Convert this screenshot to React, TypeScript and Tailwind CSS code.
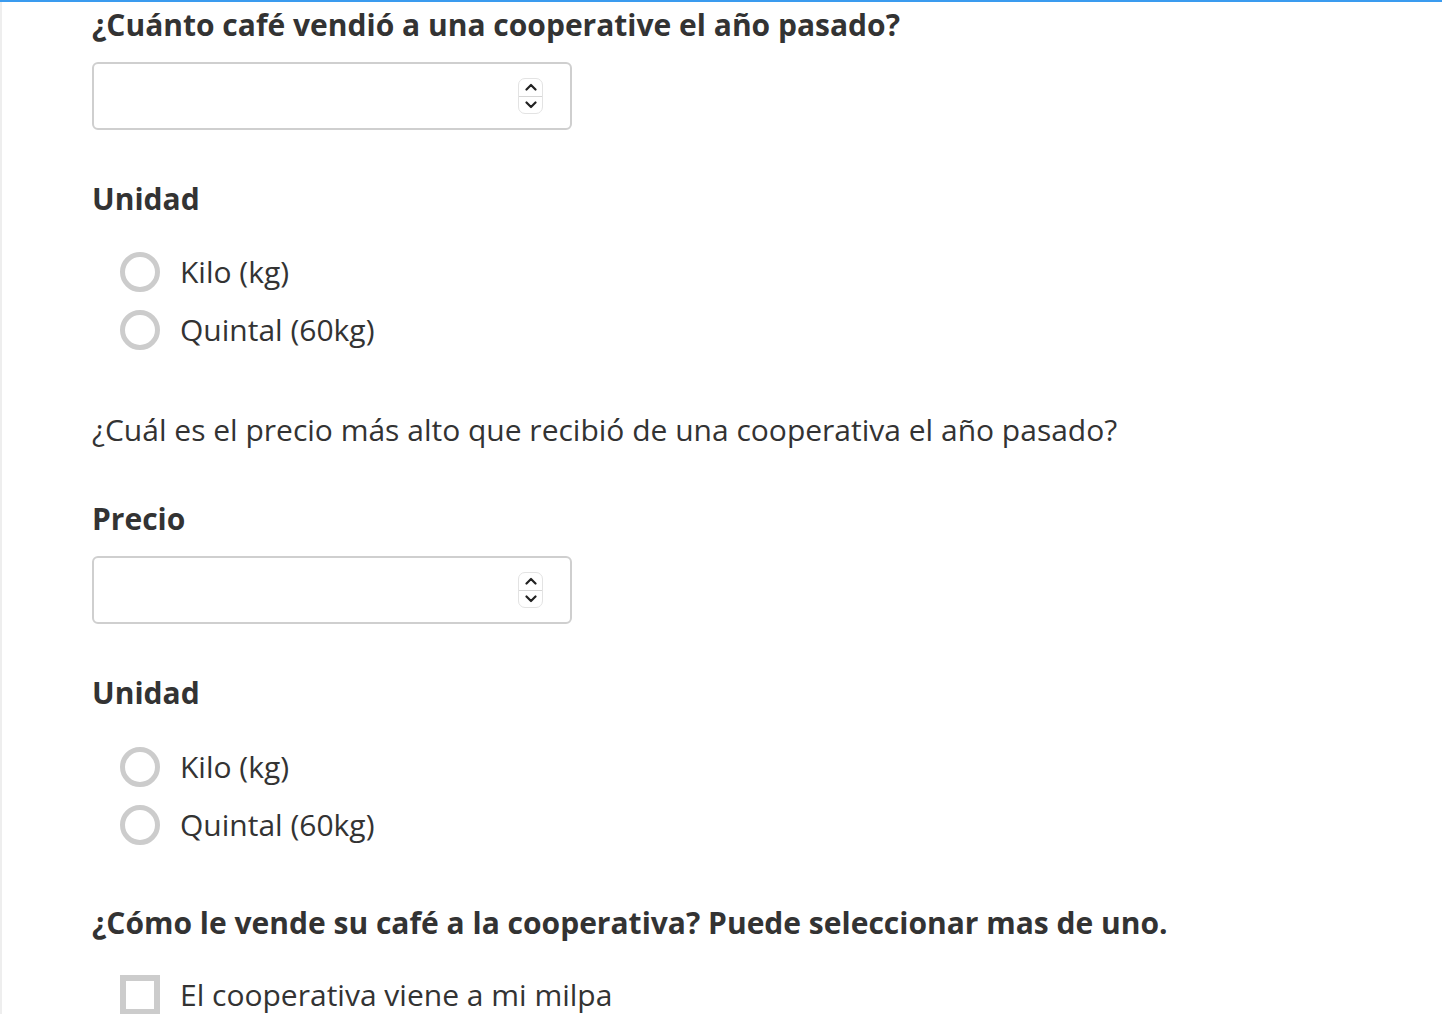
function Spinner() {
  return (
    <div className="absolute right-[27px] top-1/2 -translate-y-1/2 w-[25px] h-[36px] rounded-[7px] border border-[#e3e3e3] bg-white flex flex-col items-center">
      <div className="flex-1 flex items-center justify-center">
        <svg width="12" height="8" viewBox="0 0 12 8">
          <path d="M1.5 6.5 L6 2 L10.5 6.5" fill="none" stroke="#222" strokeWidth="2.2" strokeLinecap="round" strokeLinejoin="round" />
        </svg>
      </div>
      <div className="w-full h-px bg-[#d6d6d6]" />
      <div className="flex-1 flex items-center justify-center">
        <svg width="12" height="8" viewBox="0 0 12 8">
          <path d="M1.5 1.5 L6 6 L10.5 1.5" fill="none" stroke="#222" strokeWidth="2.2" strokeLinecap="round" strokeLinejoin="round" />
        </svg>
      </div>
    </div>
  );
}

function NumberInput() {
  return (
    <div className="relative w-[480px] h-[68px] rounded-[6px] border-2 border-[#cfcfcf] bg-white">
      <Spinner />
    </div>
  );
}

function Radio({ label }: { label: string }) {
  return (
    <label className="flex items-center h-[58px] pl-[28px]">
      <span className="w-[40px] h-[40px] rounded-full border-[5px] border-[#cccccc] bg-white shrink-0" />
      <span className="ml-[20px] text-[30px] leading-[40px] text-[#333]">{label}</span>
    </label>
  );
}

function Checkbox({ label }: { label: string }) {
  return (
    <label className="flex items-center h-[58px] pl-[28px]">
      <span className="w-[40px] h-[40px] border-[6px] border-[#cccccc] bg-white shrink-0" />
      <span className="ml-[20px] text-[30px] leading-[40px] text-[#333]">{label}</span>
    </label>
  );
}

function UnitGroup({ gap }: { gap: string }) {
  return (
    <div>
      <h3 className="text-[30px] font-bold text-[#333] leading-[40px]">Unidad</h3>
      <div className={gap}>
        <Radio label="Kilo (kg)" />
        <Radio label="Quintal (60kg)" />
      </div>
    </div>
  );
}

export default function App() {
  return (
    <div
      className="h-screen bg-white border-t-2 border-[#3a9bef] overflow-hidden"
      style={{ fontFamily: '"Open Sans", sans-serif' }}
    >
      <div className="flex min-h-full">
        <div className="w-[2px] bg-[#eeeeee] shrink-0" />
        <div className="pl-[90px] pr-10 flex flex-col">
          <h2 className="text-[30px] font-bold text-[#333] leading-[40px] mt-[3px]">
            ¿Cuánto café vendió a una cooperative el año pasado?
          </h2>
          <div className="mt-[17px]">
            <NumberInput />
          </div>
          <div className="mt-[49px]">
            <UnitGroup gap="mt-[24px]" />
          </div>
          <p className="mt-[51px] text-[30px] text-[#333] leading-[40px]">
            ¿Cuál es el precio más alto que recibió de una cooperativa el año pasado?
          </p>
          <h3 className="mt-[49px] text-[30px] font-bold text-[#333] leading-[40px]">Precio</h3>
          <div className="mt-[17px]">
            <NumberInput />
          </div>
          <div className="mt-[49px]">
            <UnitGroup gap="mt-[25px]" />
          </div>
          <h2 className="mt-[49px] text-[30px] font-bold text-[#333] leading-[40px]">
            ¿Cómo le vende su café a la cooperativa? Puede seleccionar mas de uno.
          </h2>
          <div className="mt-[23px]">
            <Checkbox label="El cooperativa viene a mi milpa" />
          </div>
        </div>
      </div>
    </div>
  );
}
